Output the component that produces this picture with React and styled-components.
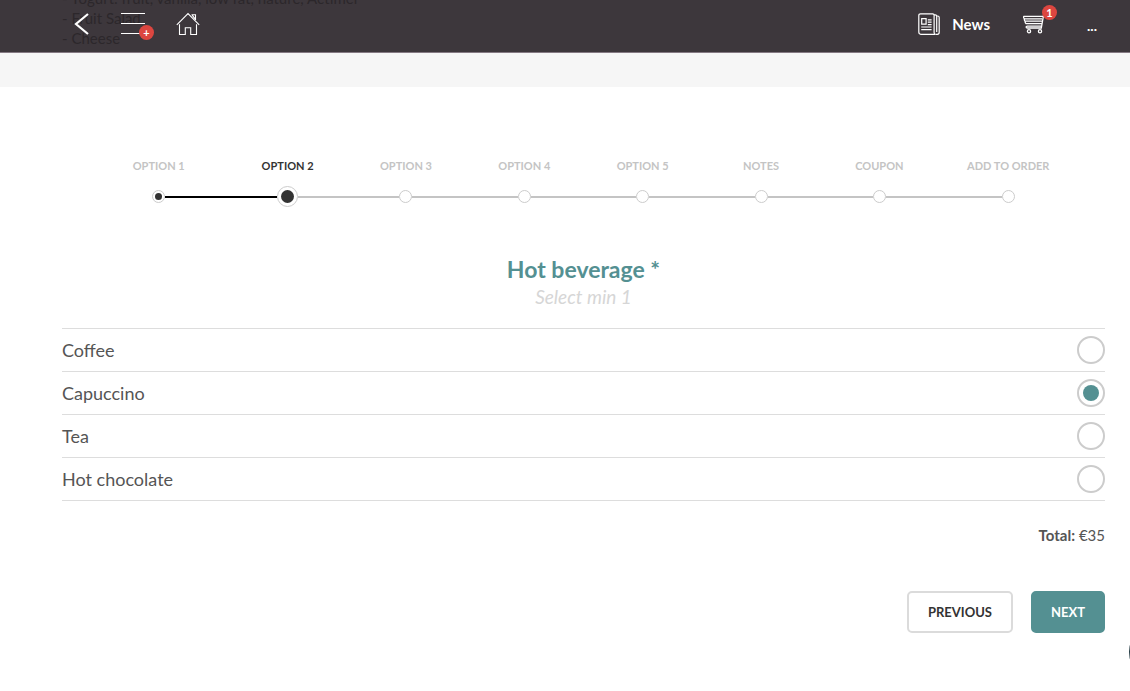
import React, { useState } from "react";
import styled, { createGlobalStyle, css } from "styled-components";

const GlobalStyle = createGlobalStyle`
  *, *::before, *::after { box-sizing: border-box; }
  body {
    margin: 0;
    background: #fff;
    color: #555;
    font-family: Lato, "Liberation Sans", sans-serif;
    overflow-x: hidden;
  }
  button, input { font-family: inherit; }
`;

const Header = styled.header`
  position: relative;
  height: 53px;
  overflow: hidden;
  background: #3d373c;
  border-bottom: 1px solid #857a83;
`;

const Beneath = styled.ul`
  position: absolute;
  top: -12px;
  left: 62px;
  margin: 0;
  padding: 0;
  list-style: none;
  font-size: 15px;
  line-height: 20px;
  color: #2c272b;
`;

const Bar = styled.nav`
  position: relative;
  display: flex;
  align-items: center;
  justify-content: space-between;
  height: 48px;
  padding: 0 33px 0 74px;
`;

const Group = styled.div`
  display: flex;
  align-items: center;
  gap: ${(p) => p.$gap}px;
`;

const NavLink = styled.a`
  position: relative;
  display: flex;
  align-items: center;
  gap: 12px;
  color: #fff;
  font-size: 15px;
  font-weight: 700;
  line-height: 20px;
  text-decoration: none;
  svg { display: block; }
`;

const Badge = styled.span`
  position: absolute;
  top: ${(p) => (p.$low ? 12 : -9)}px;
  right: ${(p) => (p.$low ? -9 : -12)}px;
  width: 15px;
  height: 15px;
  border-radius: 50%;
  background: #dc4640;
  font-size: 11px;
  line-height: 15px;
  text-align: center;
`;

const Dots = styled.span`
  padding-top: 3px;
  font-size: 14px;
`;

const Band = styled.div`
  height: 34px;
  background: #f6f6f6;
`;

const Main = styled.main`
  padding: 71px 25px 58px 62px;
`;

const Steps = styled.ol`
  display: grid;
  grid-template-columns: 139fr repeat(6, 118fr) 139fr;
  margin: 0;
  padding: 0 27px;
  list-style: none;
`;

const Step = styled.li`
  display: flex;
  flex-direction: column;
  gap: 12px;
  color: ${(p) => (p.$active ? "#333" : "#c4c4c4")};
  font-size: 11px;
  font-weight: 700;
  line-height: 16px;
  text-align: center;
`;

const Track = styled.span`
  display: flex;
  align-items: center;
  height: 21px;
`;

const Line = styled.span`
  flex: 1;
  height: 2px;
  background: ${(p) => (p.$hidden ? "transparent" : p.$done ? "#000" : "#c4c4c4")};
`;

const Dot = styled.span`
  display: flex;
  align-items: center;
  justify-content: center;
  width: ${(p) => (p.$active ? 21 : 13)}px;
  height: ${(p) => (p.$active ? 21 : 13)}px;
  border: 1px solid #ccc;
  border-radius: 50%;
  background: #fff;
  ${(p) =>
    p.$filled &&
    css`
      &::after {
        content: "";
        width: ${p.$active ? 13 : 7}px;
        height: ${p.$active ? 13 : 7}px;
        border-radius: 50%;
        background: #333;
      }
    `}
`;

const Heading = styled.div`
  margin-top: 47px;
  text-align: center;
`;

const Title = styled.h2`
  margin: 0;
  color: #549092;
  font-size: 23px;
  font-weight: 700;
  line-height: 30px;
`;

const Hint = styled.p`
  margin: 0;
  color: #d6d6d6;
  font-size: 19px;
  font-style: italic;
  line-height: 26px;
`;

const Choices = styled.div`
  margin-top: 18px;
  border-top: 1px solid #ddd;
`;

const Choice = styled.label`
  display: flex;
  align-items: center;
  justify-content: space-between;
  height: 43px;
  border-bottom: 1px solid #ddd;
  font-size: 18px;
  line-height: 24px;
  cursor: pointer;
`;

const Radio = styled.input`
  appearance: none;
  display: flex;
  align-items: center;
  justify-content: center;
  width: 28px;
  height: 28px;
  margin: 0;
  border: 2px solid #ccc;
  border-radius: 50%;
  background: #fff;
  &:checked::after {
    content: "";
    width: 16px;
    height: 16px;
    border-radius: 50%;
    background: #549092;
  }
`;

const Total = styled.p`
  margin: 24px 0 0;
  font-size: 15px;
  line-height: 20px;
  text-align: right;
`;

const Actions = styled.div`
  display: flex;
  justify-content: flex-end;
  gap: 18px;
  margin-top: 46px;
`;

const Button = styled.button`
  height: 42px;
  padding: 0 ${(p) => (p.$primary ? 18 : 19)}px;
  border: 2px solid ${(p) => (p.$primary ? "#549092" : "#dbdbdb")};
  border-radius: 5px;
  background: ${(p) => (p.$primary ? "#549092" : "#fff")};
  color: ${(p) => (p.$primary ? "#fff" : "#333")};
  font-size: 13px;
  font-weight: 700;
  cursor: pointer;
`;

const ChatButton = styled.button`
  position: fixed;
  right: -59px;
  bottom: 9px;
  width: 60px;
  height: 60px;
  padding: 0;
  border: 0;
  border-radius: 50%;
  background: #263d44;
`;

const BackIcon = () => (
  <svg width="16" height="24" viewBox="0 0 16 24" fill="none" stroke="#fff" strokeWidth="2.2" aria-hidden="true">
    <path d="M14 2 2 12l12 10" />
  </svg>
);

const MenuIcon = () => (
  <svg width="24" height="22" viewBox="0 0 24 22" fill="none" stroke="#fff" aria-hidden="true">
    <path d="M0 .5h24M0 10.5h24M0 20.5h24" />
  </svg>
);

const HomeIcon = () => (
  <svg width="24" height="24" viewBox="0 0 24 24" fill="none" stroke="#fff" strokeWidth="1.1" aria-hidden="true">
    <path d="M.8 12.8 12 1.5l11.2 11.3M3.5 12.3v10.2h5.8v-6.8h5.4v6.8h5.8V12.3M15.5 2.8h4v5.2M16.2 3.2l2.8 3.6" />
  </svg>
);

const NewsIcon = () => (
  <svg width="22" height="22" viewBox="0 0 22 22" fill="none" stroke="#fff" strokeWidth="1.2" aria-hidden="true">
    <path d="M2.5.8h12.2q1.4 0 1.4 1.5v17.2q0 1.8 1.5 1.8H2.8Q.8 21.3.8 19V2.5Q.8.8 2.5.8Z" />
    <path d="M16 1.8h1.3q1.4 0 1.4 1.5v15.8M18.7 3h1q1.5 0 1.5 1.4v14.9q0 2-1.8 2h-1.7" />
    <path d="M3.7 5.6h4.4v5.6H3.7zM9.8 6.8h3.8M9.8 9.2h3.8M9.8 11.6h3.8M3.2 14h10.4M3.2 16.6h10.4" />
  </svg>
);

const CartIcon = () => (
  <svg width="22" height="20" viewBox="0 0 22 20" fill="none" stroke="#fff" strokeWidth="1.3" aria-hidden="true">
    <path d="M22 .8h-1.4L18.3 14H4.4q-1.3 0-1.3-.9t1.3-.9H18M.5 2.4h19.2M.6 2.4q-.4 1.2.8 2.4h17.6M1.4 4.8q-.4 1.2.8 2.4h16.6M2.2 7.2q-.4 1.2.8 2.4h15.4" />
    <circle cx="6" cy="17.2" r="1.6" />
    <circle cx="17" cy="17.2" r="1.6" />
  </svg>
);

const STEPS = ["OPTION 1", "OPTION 2", "OPTION 3", "OPTION 4", "OPTION 5", "NOTES", "COUPON", "ADD TO ORDER"];
const DRINKS = ["Coffee", "Capuccino", "Tea", "Hot chocolate"];
const CURRENT = 1;

export default function App() {
  const [drink, setDrink] = useState("Capuccino");

  return (
    <>
      <GlobalStyle />
      <Header>
        <Beneath>
          <li>- Yogurt: fruit, vanilla, low fat, nature, Actimel</li>
          <li>- Fruit Salad</li>
          <li>- Cheese</li>
        </Beneath>
        <Bar>
          <Group $gap={31}>
            <NavLink href="#back" aria-label="Back">
              <BackIcon />
            </NavLink>
            <NavLink href="#menu" aria-label="Menu">
              <MenuIcon />
              <Badge $low>+</Badge>
            </NavLink>
            <NavLink href="#home" aria-label="Home">
              <HomeIcon />
            </NavLink>
          </Group>
          <Group $gap={42}>
            <Group $gap={33}>
              <NavLink href="#news">
                <NewsIcon />
                News
              </NavLink>
              <NavLink href="#cart" aria-label="Cart">
                <CartIcon />
                <Badge>1</Badge>
              </NavLink>
            </Group>
            <NavLink href="#more" aria-label="More">
              <Dots>...</Dots>
            </NavLink>
          </Group>
        </Bar>
      </Header>
      <Band />
      <Main>
        <Steps>
          {STEPS.map((name, i) => (
            <Step key={name} $active={i === CURRENT} aria-current={i === CURRENT ? "step" : undefined}>
              {name}
              <Track>
                <Line $hidden={i === 0} $done={i <= CURRENT} />
                <Dot $active={i === CURRENT} $filled={i <= CURRENT} />
                <Line $hidden={i === STEPS.length - 1} $done={i < CURRENT} />
              </Track>
            </Step>
          ))}
        </Steps>
        <Heading>
          <Title id="question">Hot beverage *</Title>
          <Hint>Select min 1</Hint>
        </Heading>
        <Choices role="radiogroup" aria-labelledby="question">
          {DRINKS.map((name) => (
            <Choice key={name}>
              {name}
              <Radio type="radio" name="drink" value={name} checked={drink === name} onChange={() => setDrink(name)} />
            </Choice>
          ))}
        </Choices>
        <Total>
          <strong>Total:</strong> €35
        </Total>
        <Actions>
          <Button type="button">PREVIOUS</Button>
          <Button type="button" $primary>
            NEXT
          </Button>
        </Actions>
      </Main>
      <ChatButton type="button" aria-label="Chat" />
    </>
  );
}
